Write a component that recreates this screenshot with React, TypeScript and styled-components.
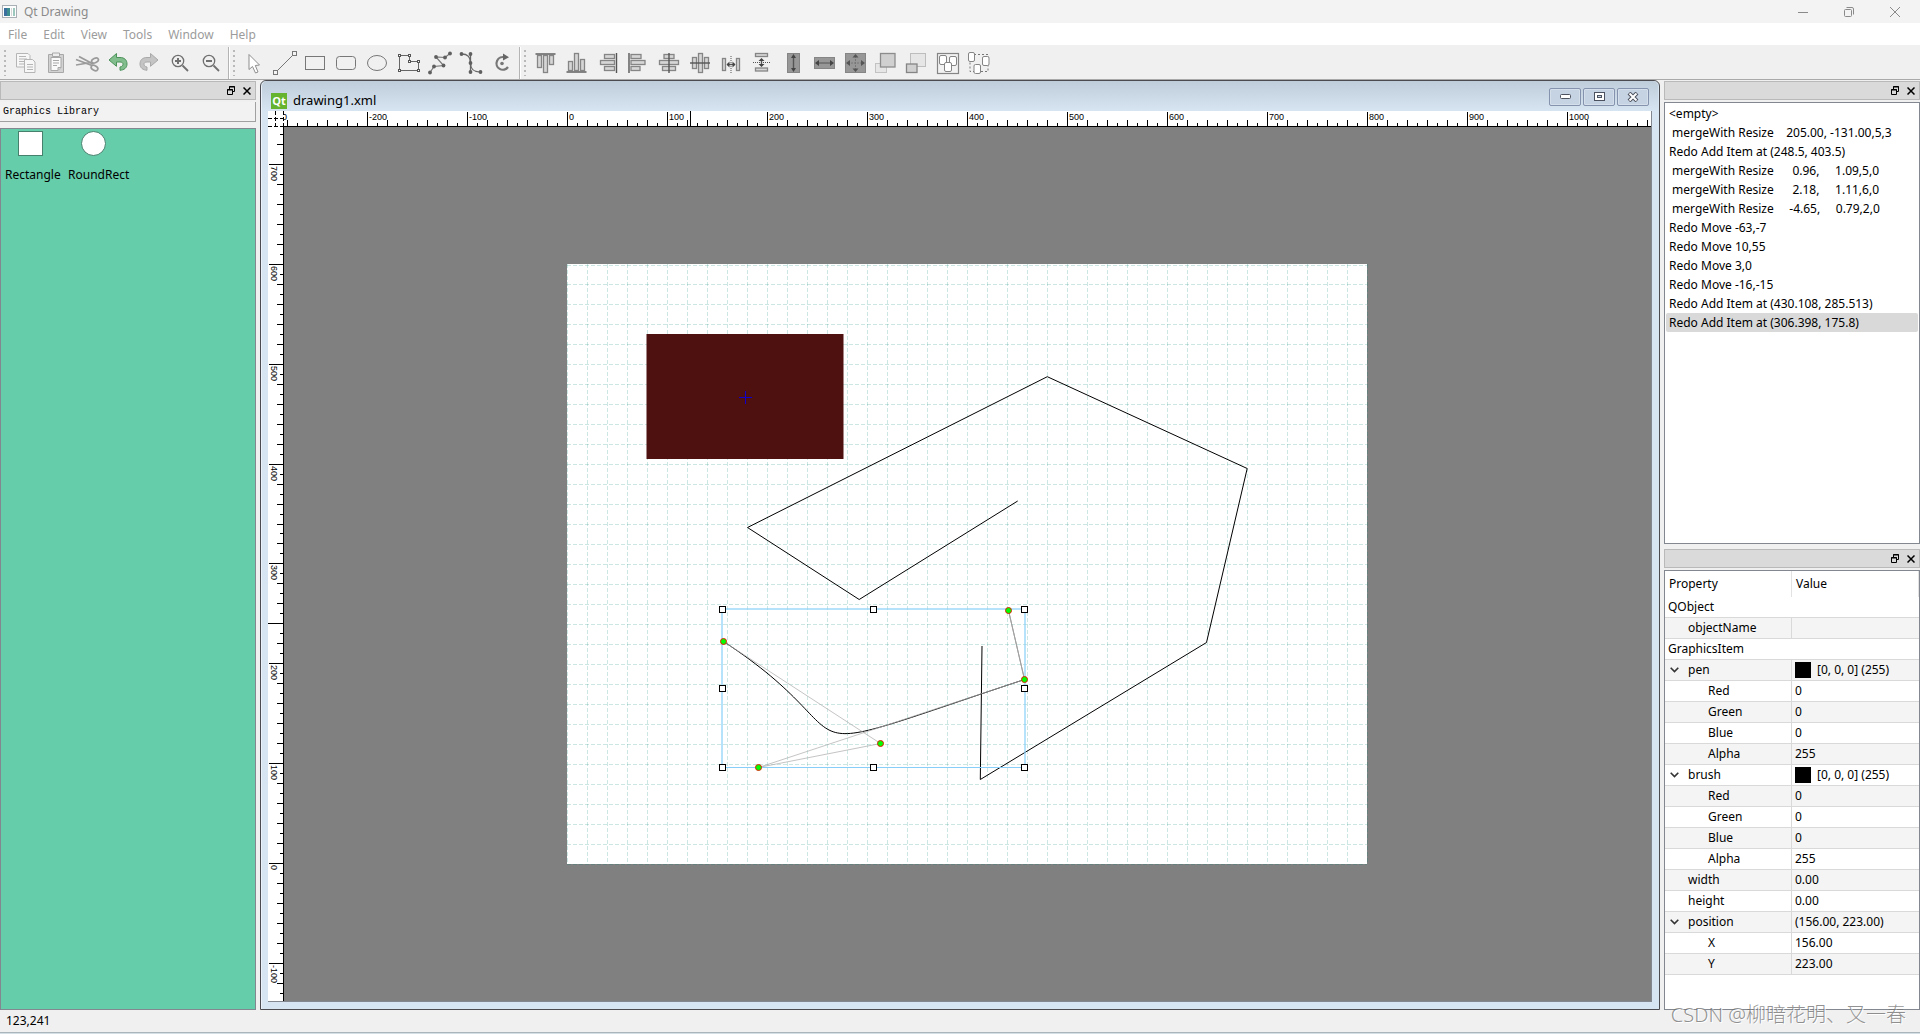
import React from "react";
import styled, { createGlobalStyle } from "styled-components";

const uiFont = `"Noto Sans", "Noto Sans CJK SC", sans-serif`;
const frameLine = "#828790";

const GlobalStyle = createGlobalStyle`
  * { box-sizing: border-box; }
  body { margin: 0; background: #f0f0f0; color: #000; font: 12px/16px ${uiFont}; }
  button { font: inherit; color: inherit; border: 0; padding: 0; background: none; }
  ul { list-style: none; margin: 0; padding: 0; }
`;

const Page = styled.div`
  display: flex;
  flex-direction: column;
  height: 100vh;
  overflow: hidden;
  border-bottom: 1px solid #d3dfe4;
`;

const TitleBar = styled.header`
  display: flex;
  align-items: center;
  gap: 7px;
  height: 23px;
  flex: none;
  padding: 0 2px;
  background: #f3f3f3;
  color: #8a8a8a;
`;

const Caption = styled.span`
  flex: 1;
`;

const CaptionButtons = styled.div`
  display: flex;
`;

const CaptionButton = styled.button`
  width: 46px;
  height: 20px;
  display: grid;
  place-items: center;
`;

const MenuBar = styled.nav`
  display: flex;
  height: 24px;
  flex: none;
  background: #fff;
  border-bottom: 2px solid #f0f0f0;
`;

const MenuItem = styled.button`
  padding: 2px 8px 0;
  color: #9c9c9c;
`;

const ToolBars = styled.div`
  display: flex;
  height: 33px;
  flex: none;
  border-bottom: 1px solid #a9a9a9;
`;

const ToolGroup = styled.div<{ $last?: boolean }>`
  display: flex;
  padding-right: 1px;
  border-right: ${(p) => (p.$last ? "0" : "1px solid #b4b4b4")};
  box-shadow: ${(p) => (p.$last ? "none" : "1px 0 #fff")};
`;

const Grip = styled.span`
  width: 2px;
  height: 26px;
  margin: 3px 4px;
  background: repeating-linear-gradient(#b9b9b9 0 2px, transparent 2px 5px);
`;

const ToolButton = styled.button`
  width: 31px;
  height: 32px;
  display: grid;
  place-items: center;
`;

const Workspace = styled.main`
  display: flex;
  flex: 1;
  min-height: 0;
  gap: 4px;
`;

const SideColumn = styled.aside`
  display: flex;
  flex-direction: column;
  width: 256px;
  flex: none;
  gap: 5px;
  padding-top: 1px;
`;

const Dock = styled.section<{ $share?: number }>`
  display: flex;
  flex-direction: column;
  flex: ${(p) => p.$share ?? 1} 1 0;
  min-height: 0;
  gap: 2px;
`;

const DockTitle = styled.div`
  display: flex;
  justify-content: flex-end;
  align-items: center;
  height: 19px;
  flex: none;
  background: #dadada;
  border: 1px solid #b9b9b9;
`;

const DockButton = styled.button`
  display: grid;
  place-items: center;
  width: 16px;
  height: 16px;
`;

const LibraryTab = styled.button`
  height: 20px;
  flex: none;
  padding: 1px 3px 0;
  text-align: left;
  background: #f2f2f2;
  border-right: 1px solid #a0a0a0;
  border-bottom: 1px solid #a0a0a0;
  font: 10px/18px "Liberation Mono", monospace;
`;

const Library = styled.ul`
  display: flex;
  flex: 1;
  gap: 5px;
  align-items: flex-start;
  margin-top: 4px;
  padding: 2px 4px;
  background: #66cdaa;
  border: 1px solid ${frameLine};
`;

const LibraryItem = styled.li`
  display: flex;
  flex-direction: column;
  gap: 11px;
  align-items: flex-start;
  min-width: 58px;
`;

const LibraryShape = styled.svg`
  display: block;
  margin-left: 13px;
`;

const Mdi = styled.section`
  display: flex;
  flex-direction: column;
  flex: 1;
  min-width: 0;
  border: 1px solid #4c4c50;
  border-radius: 6px 6px 0 0;
  background: #d7e4f2;
  box-shadow: inset 1px 1px #eaf1f8;
  padding: 0 7px 7px;
`;

const MdiTitle = styled.div`
  display: flex;
  align-items: center;
  gap: 2px;
  height: 30px;
  flex: none;
  margin: 0 -6px;
  padding: 1px 9px 0;
  border-radius: 5px 5px 0 0;
  background: linear-gradient(#bfccd9, #d7e4f2);
`;

const MdiName = styled.span`
  flex: 1;
  padding: 9px 0 3px 4px;
  font-size: 13px;
  line-height: 18px;
`;

const QtLogo = styled.svg`
  margin-top: 8px;
`;

const MdiButton = styled.button`
  width: 32px;
  height: 18px;
  display: grid;
  place-items: center;
  margin-right: 0;
  border: 1px solid #8693ae;
  border-radius: 2px;
  background: #c6d3e2;
  box-shadow: inset 0 0 0 1px #d5dfeb;
`;

const View = styled.div`
  display: grid;
  flex: 1;
  min-height: 0;
  grid-template: 16px 1fr / 16px 1fr;
  border-right: 1px solid ${frameLine};
  border-bottom: 1px solid ${frameLine};
  background: #808080;
`;

const RulerTop = styled.div`
  display: flex;
  justify-content: center;
  overflow: hidden;
  background: #fff;
  border-bottom: 1px solid #000;
`;

const RulerLeft = styled.div`
  display: flex;
  align-items: center;
  overflow: hidden;
  background: #fff;
  border-right: 1px solid #000;
`;

const RulerCorner = styled.svg`
  display: block;
  background: #fff;
`;

const Canvas = styled.div`
  display: grid;
  place-items: center;
  min-width: 0;
  min-height: 0;
  overflow: hidden;
`;

const Drawing = styled.svg`
  display: block;
  flex: none;
  overflow: visible;
`;

const Label = styled.text`
  font: 9px "Liberation Sans", sans-serif;
`;

const UndoList = styled.ul`
  flex: 1;
  padding: 1px;
  background: #fff;
  border: 1px solid ${frameLine};
`;

const UndoItem = styled.li<{ $current?: boolean }>`
  padding: 0 3px;
  line-height: 19px;
  white-space: pre;
  border-radius: 2px;
  background: ${(p) => (p.$current ? "#d9d9d9" : "transparent")};
`;

const TableBox = styled.div`
  flex: 1;
  background: #fff;
  border: 1px solid ${frameLine};
`;

const PropertyTable = styled.table`
  width: 100%;
  table-layout: fixed;
  border-spacing: 0;
`;

const HeadCell = styled.th`
  height: 26px;
  padding: 0 4px;
  text-align: left;
  font-weight: 400;
  border-right: 1px solid #e2e2e2;
  &:first-child { width: 127px; }
`;

const GroupCell = styled.td`
  height: 21px;
  padding: 0 3px;
  border-bottom: 1px solid #d9d9d9;
`;

const Row = styled.tr<{ $shade: boolean }>`
  background: ${(p) => (p.$shade ? "#f4f4f4" : "#fff")};
`;

const Cell = styled.td`
  height: 21px;
  padding: 0 3px;
  border-bottom: 1px solid #d9d9d9;
  &:first-child { border-right: 1px solid #d9d9d9; }
`;

const Name = styled.div<{ $depth: number }>`
  display: flex;
  align-items: center;
  padding-left: ${(p) => (p.$depth - 1) * 20}px;
`;

const Expander = styled.button`
  width: 20px;
  height: 16px;
  display: flex;
  align-items: center;
  padding-left: 2px;
`;

const Spacer = styled.span`
  width: 20px;
`;

const Value = styled.div`
  display: flex;
  align-items: center;
  gap: 6px;
`;

const Swatch = styled.span`
  width: 16px;
  height: 16px;
  background: #000;
`;

const Status = styled.footer`
  height: 23px;
  flex: none;
  padding: 3px 6px;
  border-bottom: 1px solid #a9b5bb;
`;

const Watermark = styled.div`
  position: absolute;
  right: 14px;
  bottom: 5px;
  color: rgba(110, 110, 110, 0.75);
  text-shadow: 1px 1px #fff;
  font: 300 20px/28px "Noto Sans", "Noto Sans CJK SC", sans-serif;
  white-space: nowrap;
`;

/* ---------- icons: all tool icons live in a 25 x 24 box ---------- */

const bar = { fill: "#d6d6d6", stroke: "#858585" };
const dark = { stroke: "#555", strokeWidth: 1.4, fill: "none" };

type B = [number, number, number, number];
const Bars = ({ list }: { list: B[] }) => (
  <>
    {list.map(([x, y, w, h], i) => (
      <rect key={i} x={x} y={y} width={w} height={h} {...bar} strokeWidth={1.3} />
    ))}
  </>
);

const Nodes = ({ pts, r = 1.9 }: { pts: [number, number][]; r?: number }) => (
  <>
    {pts.map(([x, y], i) => (
      <circle key={i} cx={x} cy={y} r={r} fill="#5f5f5f" />
    ))}
  </>
);

const undoShape = "M3 9 L10.5 2.5 V6.5 H14 C18.5 6.5 21 9 21 13 C21 17 18 19 14 19.3 V16 C16 15.6 17 14.6 17 13.2 C17 11.8 16 11 14 11 H10.5 V15.3 Z";

const editTools: [string, React.ReactNode][] = [
  ["Copy", <g stroke="#b5b5b5" fill="#f7f7f7"><path d="M3.500 2.500h11.500l2 2v11.500h-13.500z" /><path d="M6 5.500h7M6 8h8M6 10.500h8M6 13h5" /><path d="M11.500 8.500h8l2.500 2.500v10.500h-10.500z" /><path d="M14 13.500h6M14 16h6M14 18.500h6" /></g>],
  ["Paste", <g stroke="#a8a8a8" fill="#d2d2d2"><path d="M4.500 3.500h15v18h-15z" /><path d="M7 6.500h10v10l-3 3h-7z" fill="#fafafa" /><path d="M8.500 2h7v3.500h-7z" fill="#eee" /><path d="M9 9.500h6M9 12h6M9 14.500h4M14 19.500v-3h3" /></g>],
  ["Cut", <g stroke="#9a9a9a" fill="none"><path d="M1 8.500 L17 14.500 M4 5.500 L18 13" strokeWidth="1.800" /><path d="M1 14 L16 11.500" strokeWidth="1.500" /><ellipse cx="20" cy="9.500" rx="3.600" ry="2.200" transform="rotate(-24 20 9.500)" strokeWidth="1.700" /><ellipse cx="19.500" cy="17" rx="3.600" ry="2.300" transform="rotate(28 19.500 17)" strokeWidth="1.700" /></g>],
  ["Undo", <path d={undoShape} fill="#82be8d" stroke="#4b9159" />],
  ["Redo", <path d={undoShape} fill="#c4c4c4" stroke="#a9a9a9" transform="translate(24 0) scale(-1 1)" />],
  ["Zoom in", <g stroke="#707070" fill="none"><circle cx="10" cy="10" r="5.700" strokeWidth="1.300" /><path d="M14.500 14.500 L20 20" strokeWidth="1.800" /><path d="M7 10h6M10 7v6" strokeWidth="2" /></g>],
  ["Zoom out", <g stroke="#707070" fill="none"><circle cx="10" cy="10" r="5.700" strokeWidth="1.300" /><path d="M14.500 14.500 L20 20" strokeWidth="1.800" /><path d="M7 10h6" strokeWidth="2" /></g>],
];

const shapeTools: [string, React.ReactNode][] = [
  ["Select", <path d="M7 3.500 V18.500 L10.500 15.500 L13.500 22 L16 21 L13.300 14.500 L17.500 14 Z" fill="#fff" stroke="#8d8d8d" />],
  ["Line", <g stroke="#777" fill="#f4f4f4"><path d="M3.500 20.500 L20 4" /><rect x="0.500" y="19.500" width="4" height="4" /><rect x="19.500" y="0.500" width="4" height="4" /></g>],
  ["Rectangle", <rect x="1.500" y="5.500" width="19" height="13" fill="none" stroke="#777" />],
  ["Rounded rectangle", <rect x="1.500" y="5.500" width="19" height="13" rx="3" fill="none" stroke="#777" />],
  ["Ellipse", <ellipse cx="11" cy="12" rx="9.500" ry="7.500" fill="none" stroke="#777" />],
  ["Polygon", <g><path d="M2.500 4.500H12.500V10.500H21.500V19.500H2.500Z" fill="none" stroke="#666" />{[[2.5, 4.5], [12.5, 4.5], [12.5, 10.5], [21.5, 10.5], [21.5, 19.5], [2.5, 19.5]].map(([x, y], i) => <rect key={i} x={x - 1} y={y - 1} width="2" height="2" fill="#fff" stroke="#555" />)}</g>],
  ["Polyline", <g><path d="M2 21.500 L6 15.500 L15.500 14.500 L8 6 L17 6.500 L22 2.500" fill="none" stroke="#777" strokeWidth="1.200" /><Nodes pts={[[2, 21.5], [6, 15.5], [15.5, 14.5], [8, 6], [17, 6.5], [22, 2.5]]} /></g>],
  ["Bezier", <g><path d="M2.500 3 C9 3 11.500 6 11.500 12 C11.500 18 14 21 21.500 21" fill="none" stroke="#666" strokeWidth="1.300" /><path d="M11.500 3v18" stroke="#666" strokeWidth="1.300" /><Nodes pts={[[2.5, 3], [11.5, 3], [11.5, 12], [11.5, 21], [21.5, 21]]} /></g>],
  ["Rotate", <g><path d="M15 6.500 A6.300 6.300 0 1 0 18 16" fill="none" stroke="#777" strokeWidth="2.200" /><path d="M13 2.500 L19 6.300 L13 9.500Z" fill="#666" /><circle cx="12" cy="12.500" r="1.800" fill="#777" /></g>],
];

const alignTools: [string, React.ReactNode][] = [
  ["Align top", <g><Bars list={[[4.5, 4.5, 4, 12], [10.5, 4.5, 4, 17], [16.5, 4.5, 4, 9]]} /><path d="M2.500 3h20" {...dark} /></g>],
  ["Align bottom", <g><Bars list={[[4.5, 10.5, 4, 9], [10.5, 2.5, 4, 17], [16.5, 8.5, 4, 11]]} /><path d="M2.500 21h20" {...dark} /></g>],
  ["Align right", <g><Bars list={[[9.5, 3.5, 10, 4], [5.5, 9.5, 14, 4], [9.5, 15.5, 10, 4]]} /><path d="M21.500 2v20" {...dark} /></g>],
  ["Align left", <g><Bars list={[[5, 3.5, 10, 4], [5, 9.5, 14, 4], [5, 15.5, 9, 4]]} /><path d="M3 2v20" {...dark} /></g>],
  ["Center horizontally", <g><Bars list={[[7, 3.5, 10, 4], [2.5, 9.5, 19, 4], [5.5, 15.5, 13, 4]]} /><path d="M12 2v20" {...dark} /></g>],
  ["Center vertically", <g><Bars list={[[4.5, 6.5, 4, 11], [10.5, 2.5, 4, 19], [16.5, 6.5, 4, 11]]} /><path d="M2 12h20" {...dark} /></g>],
  ["Space horizontally", <g><Bars list={[[3.5, 7.5, 3, 12], [17.5, 7.5, 3, 12]]} /><path d="M12 5v17" stroke="#555" strokeDasharray="1 1" /><path d="M8 13.500h8" {...dark} /><path d="M7.500 13.500l3-3v6zM16.500 13.500l-3-3v6z" fill="#444" /></g>],
  ["Space vertically", <g><Bars list={[[5.5, 2.5, 12, 3], [5.5, 17, 12, 3]]} /><path d="M3 11.500h17" stroke="#555" strokeDasharray="1 1" /><path d="M11.500 8v7" {...dark} /><path d="M11.500 7l-3 3h6zM11.500 16l-3-3h6z" fill="#444" /></g>],
  ["Same height", <g><rect x="6.500" y="2.500" width="12" height="19" fill="#979797" stroke="#858585" /><path d="M12.500 5v14" {...dark} /><path d="M12.500 3l-2.500 4h5zM12.500 21l-2.500-4h5z" fill="#444" /></g>],
  ["Same width", <g><rect x="2.500" y="6.500" width="20" height="11" fill="#979797" stroke="#858585" /><path d="M5 12h15" {...dark} strokeWidth={1} /><path d="M3 12l4-3v6zM22 12l-4-3v6z" fill="#444" /></g>],
  ["Same size", <g><rect x="2.500" y="2.500" width="20" height="19" fill="#979797" stroke="#858585" /><path d="M5 12h15M12.500 5v14" stroke="#777" strokeDasharray="2 1" /><path d="M3 12l4-3v6zM22 12l-4-3v6zM12.500 3l-3 3.500h6zM12.500 21l-3-3.500h6z" fill="#555" /></g>],
  ["Bring to front", <g><rect x="1.500" y="12.500" width="11" height="9" fill="#e6e6e6" stroke="#c2c2c2" /><rect x="6.500" y="2.500" width="14.500" height="13.500" fill="#d0d0d0" stroke="#8c8c8c" strokeWidth="1.300" /></g>],
  ["Send to back", <g><rect x="5.500" y="2.500" width="15" height="13" fill="#e6e6e6" stroke="#bdbdbd" /><rect x="1.500" y="13" width="10.500" height="8.500" fill="#d0d0d0" stroke="#858585" strokeWidth="1.300" /></g>],
  ["Group", <g fill="#fff" stroke="#858585"><rect x="1.500" y="2.500" width="21" height="20" fill="#f2f2f2" strokeWidth="1.200" /><rect x="3.500" y="4.500" width="7" height="9" rx="1.500" /><rect x="13.500" y="5.500" width="7" height="9" rx="1.500" /><rect x="8.500" y="11.500" width="7" height="9" rx="1.500" /></g>],
  ["Ungroup", <g fill="#fff" stroke="#858585"><rect x="3" y="3.500" width="18" height="17" fill="none" strokeDasharray="2 2" stroke="#777" /><rect x="1.500" y="1.500" width="6" height="9" rx="1.500" /><rect x="15.500" y="5.500" width="6.500" height="9" rx="1.500" /><rect x="7" y="13.500" width="6.500" height="9" rx="1.500" /></g>],
];

const Tools = ({ items, last }: { items: [string, React.ReactNode][]; last?: boolean }) => (
  <ToolGroup $last={last}>
    <Grip />
    {items.map(([name, art]) => (
      <ToolButton key={name} aria-label={name}>
        <svg width="25" height="24" viewBox="0 0 25 24">{art}</svg>
      </ToolButton>
    ))}
  </ToolGroup>
);

const DockHeader = () => (
  <DockTitle>
    <DockButton aria-label="Float">
      <svg width="8" height="9" viewBox="0 0 8 9" fill="none" stroke="#000">
        <path d="M2.500 3V.5h5v5H5.500M2 1h6M.5 3.500h5v5h-5zM0 4h6" />
      </svg>
    </DockButton>
    <DockButton aria-label="Close">
      <svg width="8" height="8" viewBox="0 0 8 8" stroke="#000" strokeWidth="1.500">
        <path d="M.5.500l7 7M7.500.500l-7 7" />
      </svg>
    </DockButton>
  </DockTitle>
);

/* ---------- rulers ---------- */

const steps = (from: number, to: number) =>
  Array.from({ length: (to - from) / 10 + 1 }, (_, i) => from + i * 10);
const tickLength = (v: number) => (v % 100 === 0 ? 14 : v % 20 === 0 ? 6 : 3);
const rowOf = (v: number) => Math.round(599.2 - v * 0.9991);

const HorizontalRuler = () => (
  <Drawing width="801" height="15">
    {steps(-300, 1080).map((v) => (
      <g key={v}>
        <rect x={v} y={15 - tickLength(v)} width="1" height={tickLength(v)} />
        {v % 100 === 0 && <Label x={v + 2} y="9">{v}</Label>}
      </g>
    ))}
    <rect x="123" y="0" width="1" height="15" />
  </Drawing>
);

const VerticalRuler = () => (
  <Drawing width="15" height="600">
    {steps(-130, 730).map((v) => (
      <g key={v}>
        <rect x={15 - tickLength(v)} y={rowOf(v)} width={tickLength(v)} height="1" />
        {v % 100 === 0 && (
          <Label transform={`translate(3 ${rowOf(v) + 2}) rotate(90)`}>{v}</Label>
        )}
      </g>
    ))}
    <rect x="0" y="359" width="15" height="1" />
  </Drawing>
);

/* ---------- scene ---------- */

const controls: [number, number][] = [
  [156.5, 377.5], [313.5, 479.5], [191.5, 503.5], [457.5, 415.5], [441.5, 346.5],
];
const handles: [number, number][] = [
  [155.5, 345.5], [306.5, 345.5], [457.5, 345.5], [155.5, 424.5],
  [457.5, 424.5], [155.5, 503.5], [306.5, 503.5], [457.5, 503.5],
];

const Scene = () => (
  <Drawing width="801" height="600">
    <rect width="800" height="600" fill="#fff" />
    <g stroke="rgb(0,128,115)" strokeOpacity="0.2" strokeDasharray="4 2">
      {Array.from({ length: 41 }, (_, i) => (
        <path key={i} d={`M${i * 20 + 0.5} 0V600`} />
      ))}
      {Array.from({ length: 31 }, (_, i) => (
        <path key={i} d={`M0 ${i === 0 ? 1.5 : i * 20 + 0.5}H800`} />
      ))}
    </g>
    <rect x="79.500" y="70" width="197" height="125" fill="#4f1010" />
    <path d="M172 133.500h13M178.500 127v13" stroke="#1000c8" />
    <path
      d="M415 382L413.300 515.500L639.500 378.500L680.200 204.500L480.300 112.700L180.500 263.500L292.200 335.500L450.700 237"
      fill="none"
      stroke="#000"
    />
    <path d="M156.500 377.500C313.500 479.500 191.500 503.500 457.500 415.500" fill="none" stroke="#000" />
    <path d="M457.500 415.500L441.500 346.500" stroke="#777" />
    <path d={"M" + controls.map((p) => p.join(" ")).join("L")} fill="none" stroke="#b0b0b0" strokeOpacity="0.75" />
    <path d="M155.500 503.500H457.500" stroke="#87cefa" />
    <path d="M155 503V345H458V503" fill="none" stroke="#87cefa" strokeOpacity="0.6" strokeWidth="2" />
    {handles.map(([x, y]) => (
      <rect key={`${x}-${y}`} x={x - 3} y={y - 3} width="6" height="6" fill="#fff" stroke="#000" />
    ))}
    {controls.map(([x, y]) => (
      <circle key={`${x}-${y}`} cx={x} cy={y} r="3" fill="#0f0" stroke="#e02000" />
    ))}
  </Drawing>
);

/* ---------- side panels data ---------- */

const history = [
  "<empty>",
  " mergeWith Resize    205.00, -131.00,5,3",
  "Redo Add Item at (248.5, 403.5)",
  " mergeWith Resize      0.96,     1.09,5,0",
  " mergeWith Resize      2.18,     1.11,6,0",
  " mergeWith Resize     -4.65,     0.79,2,0",
  "Redo Move -63,-7",
  "Redo Move 10,55",
  "Redo Move 3,0",
  "Redo Move -16,-15",
  "Redo Add Item at (430.108, 285.513)",
  "Redo Add Item at (306.398, 175.8)",
];

type Prop = { name: string; value?: string; depth: number; open?: boolean; color?: boolean };
const rgba: Prop[] = [
  { name: "Red", value: "0", depth: 2 },
  { name: "Green", value: "0", depth: 2 },
  { name: "Blue", value: "0", depth: 2 },
  { name: "Alpha", value: "255", depth: 2 },
];
const properties: Prop[] = [
  { name: "QObject", depth: 0 },
  { name: "objectName", value: "", depth: 1 },
  { name: "GraphicsItem", depth: 0 },
  { name: "pen", value: "[0, 0, 0] (255)", depth: 1, open: true, color: true },
  ...rgba,
  { name: "brush", value: "[0, 0, 0] (255)", depth: 1, open: true, color: true },
  ...rgba,
  { name: "width", value: "0.00", depth: 1 },
  { name: "height", value: "0.00", depth: 1 },
  { name: "position", value: "(156.00, 223.00)", depth: 1, open: true },
  { name: "X", value: "156.00", depth: 2 },
  { name: "Y", value: "223.00", depth: 2 },
];

const PropertyRow = ({ item, index }: { item: Prop; index: number }) =>
  item.depth === 0 ? (
    <tr>
      <GroupCell colSpan={2}>{item.name}</GroupCell>
    </tr>
  ) : (
    <Row $shade={index % 2 === 1}>
      <Cell>
        <Name $depth={item.depth}>
          {item.open ? (
            <Expander aria-label={`Collapse ${item.name}`}>
              <svg width="9" height="6" viewBox="0 0 9 6" fill="none" stroke="#333" strokeWidth="1.600">
                <path d="M.7.700L4.500 4.500L8.300.700" />
              </svg>
            </Expander>
          ) : (
            <Spacer />
          )}
          {item.name}
        </Name>
      </Cell>
      <Cell>
        <Value>
          {item.color && <Swatch />}
          {item.value}
        </Value>
      </Cell>
    </Row>
  );

export default function App() {
  return (
    <Page>
      <GlobalStyle />
      <TitleBar>
        <svg width="15" height="14" viewBox="0 0 15 14">
          <rect x=".5" y=".5" width="14" height="12" fill="#fdfdfd" stroke="#a9b0b5" />
          <rect x="2" y="3" width="6" height="8" fill="#3d8f8f" />
          <rect x="2" y="3" width="3" height="8" fill="#3b6fa0" />
          <rect x="9" y="3" width="1" height="8" fill="#d5d5d5" />
          <rect x="11" y="3" width="2" height="8" fill="#9cc7bd" />
        </svg>
        <Caption>Qt Drawing</Caption>
        <CaptionButtons>
          <CaptionButton aria-label="Minimize window">
            <svg width="10" height="10" stroke="#8a8a8a"><path d="M0 5.500H10" /></svg>
          </CaptionButton>
          <CaptionButton aria-label="Restore window">
            <svg width="10" height="10" fill="none" stroke="#8a8a8a">
              <rect x=".5" y="2.500" width="7" height="7" rx="1" />
              <path d="M2.500.500H8a1.500 1.500 0 0 1 1.500 1.500V7.500" />
            </svg>
          </CaptionButton>
          <CaptionButton aria-label="Close window">
            <svg width="10" height="10" stroke="#8a8a8a"><path d="M0 0L10 10M10 0L0 10" /></svg>
          </CaptionButton>
        </CaptionButtons>
      </TitleBar>
      <MenuBar>
        {["File", "Edit", "View", "Tools", "Window", "Help"].map((m) => (
          <MenuItem key={m}>{m}</MenuItem>
        ))}
      </MenuBar>
      <ToolBars>
        <Tools items={editTools} />
        <Tools items={shapeTools} />
        <Tools items={alignTools} last />
      </ToolBars>
      <Workspace>
        <SideColumn>
          <Dock>
            <DockHeader />
            <LibraryTab>Graphics Library</LibraryTab>
            <Library>
              <LibraryItem>
                <LibraryShape width="25" height="25">
                  <rect x=".5" y=".5" width="24" height="24" fill="#fff" stroke="#47806d" />
                </LibraryShape>
                Rectangle
              </LibraryItem>
              <LibraryItem>
                <LibraryShape width="25" height="25">
                  <circle cx="12.500" cy="12.500" r="12" fill="#fff" stroke="#47806d" />
                </LibraryShape>
                RoundRect
              </LibraryItem>
            </Library>
          </Dock>
        </SideColumn>
        <Mdi>
          <MdiTitle>
            <QtLogo width="16" height="16" viewBox="0 0 16 16">
              <rect width="16" height="16" fill="#65b32e" />
              <text x="8" y="12" textAnchor="middle" fontFamily="Open Sans, sans-serif" fontWeight="700" fontSize="11" fill="#fff">Qt</text>
            </QtLogo>
            <MdiName>drawing1.xml</MdiName>
            <MdiButton aria-label="Minimize">
              <svg width="11" height="5"><rect x=".5" y=".5" width="10" height="4" rx="1" fill="#fff" stroke="#4d5260" /></svg>
            </MdiButton>
            <MdiButton aria-label="Maximize">
              <svg width="11" height="9"><rect x=".5" y=".5" width="10" height="8" fill="#fff" stroke="#4d5260" /><rect x="3.500" y="3.500" width="4" height="2" fill="#c6d3e2" stroke="#4d5260" /></svg>
            </MdiButton>
            <MdiButton aria-label="Close drawing">
              <svg width="12" height="10" viewBox="0 0 12 10"><path d="M2 1l8 8M10 1l-8 8" stroke="#4d5260" strokeWidth="4" /><path d="M2.500 1.500l7 7M9.500 1.500l-7 7" stroke="#fff" strokeWidth="2" /></svg>
            </MdiButton>
          </MdiTitle>
          <View>
            <RulerCorner width="16" height="16" stroke="#000" strokeDasharray="4 2">
              <path d="M0 7.500H16M7.500 0V16M0 15.500H16M15.500 0V16" />
            </RulerCorner>
            <RulerTop><HorizontalRuler /></RulerTop>
            <RulerLeft><VerticalRuler /></RulerLeft>
            <Canvas><Scene /></Canvas>
          </View>
        </Mdi>
        <SideColumn>
          <Dock $share={463}>
            <DockHeader />
            <UndoList>
              {history.map((h, i) => (
                <UndoItem key={h} $current={i === history.length - 1}>{h}</UndoItem>
              ))}
            </UndoList>
          </Dock>
          <Dock $share={461}>
            <DockHeader />
            <TableBox>
              <PropertyTable>
                <thead>
                  <tr><HeadCell>Property</HeadCell><HeadCell>Value</HeadCell></tr>
                </thead>
                <tbody>
                  {properties.map((p, i) => <PropertyRow key={i} item={p} index={i} />)}
                </tbody>
              </PropertyTable>
            </TableBox>
          </Dock>
        </SideColumn>
      </Workspace>
      <Status>123,241</Status>
      <Watermark>CSDN @柳暗花明、又一春</Watermark>
    </Page>
  );
}
